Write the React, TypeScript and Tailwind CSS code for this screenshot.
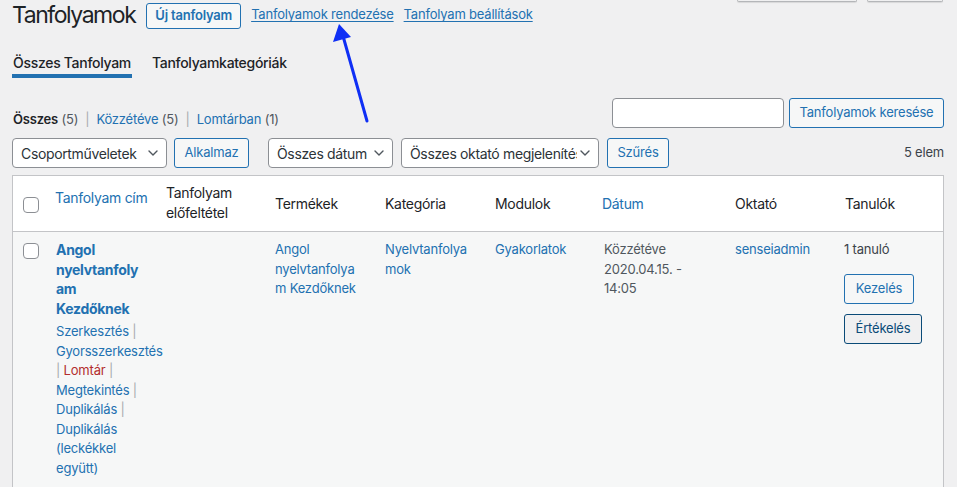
import React from "react";

const Chevron = () => (
  <svg width="10" height="6" viewBox="0 0 10 6" className="shrink-0">
    <path d="M1 1l4 4 4-4" fill="none" stroke="#50575e" strokeWidth="1.4" strokeLinecap="round" strokeLinejoin="round" />
  </svg>
);

const Checkbox = ({ className = "" }: { className?: string }) => (
  <div className={`w-[16px] h-[16px] rounded-[4px] border border-[#8c8f94] bg-white ${className}`} />
);

const Select = ({ label, w }: { label: string; w: string }) => (
  <div className={`${w} h-[30px] flex items-center bg-white border border-[#8c8f94] rounded-[4px] pl-[8px] pr-[8px] text-[14px] tracking-[-0.35px] text-[#2c3338]`}>
    <div className="flex-1 overflow-hidden whitespace-nowrap">{label}</div>
    <div className="ml-[3px]">
      <Chevron />
    </div>
  </div>
);

const SecBtn = ({ label, className = "" }: { label: string; className?: string }) => (
  <div className={`h-[30px] px-[10px] flex items-center justify-center border border-[#2271b1] rounded-[3px] bg-[#f6f7f7] text-[#2271b1] text-[13px] whitespace-nowrap ${className}`}>
    {label}
  </div>
);

const Sep = () => <span className="text-[#a7aaad]">|</span>;

export default function App() {
  return (
    <div className="w-[957px] h-[487px] overflow-hidden bg-[#f0f0f1] relative font-[family-name:Inter,sans-serif] text-[13px] tracking-[-0.2px] text-[#3c434a]">
      <div className="pl-[12px] pr-[13px]">
        {/* header */}
        <div className="flex justify-between">
          <div className="flex items-center h-[30px]">
            <h1 className="text-[23px] leading-[30px] tracking-[-1.45px] text-[#1d2327] font-normal">Tanfolyamok</h1>
            <div className="ml-[11px] mt-[1px] h-[26px] px-[8px] flex items-center border border-[#2271b1] rounded-[3px] bg-[#f6f7f7] text-[#2271b1] font-semibold text-[13px]">
              Új tanfolyam
            </div>
            <span className="ml-[10px] text-[#2271b1] underline underline-offset-2">Tanfolyamok rendezése</span>
            <span className="ml-[10px] text-[#2271b1] underline underline-offset-2">Tanfolyam beállítások</span>
          </div>
          <div className="flex gap-[10px] pr-[1px]">
            <div className="w-[120px] h-[2px] border-b border-x border-[#b4b6b9] rounded-b-[3px] shadow-[0_1px_1px_rgba(0,0,0,0.1)]" />
            <div className="w-[76px] h-[2px] border-b border-x border-[#b4b6b9] rounded-b-[3px] shadow-[0_1px_1px_rgba(0,0,0,0.1)]" />
          </div>
        </div>

        {/* tabs */}
        <div className="flex gap-[20px] mt-[23px] text-[14px] tracking-[-0.3px] text-[#1d2327]">
          <div className="leading-[20px] pb-[1px] border-b-[4px] border-[#2271b1] px-[1px] font-medium">Összes Tanfolyam</div>
          <div className="leading-[20px] pb-[1px] border-b-[4px] border-transparent font-medium">Tanfolyamkategóriák</div>
        </div>

        {/* status + search */}
        <div className="flex justify-between items-start mt-[20px]">
          <div className="mt-[11px] leading-[20px] pl-[1px] flex gap-[7px]">
            <span>
              <span className="font-semibold text-[#1d2327]">Összes</span> <span className="text-[#50575e]">(5)</span>
            </span>
            <Sep />
            <span>
              <span className="text-[#2271b1]">Közzétéve</span> <span className="text-[#50575e]">(5)</span>
            </span>
            <Sep />
            <span>
              <span className="text-[#2271b1]">Lomtárban</span> <span className="text-[#50575e]">(1)</span>
            </span>
          </div>
          <div className="flex items-center gap-[5px]">
            <div className="w-[172px] h-[30px] bg-white border border-[#8c8f94] rounded-[4px]" />
            <SecBtn label="Tanfolyamok keresése" className="w-[155px]" />
          </div>
        </div>

        {/* tablenav */}
        <div className="flex items-center mt-[9px]">
          <Select label="Csoportműveletek" w="w-[155px]" />
          <SecBtn label="Alkalmaz" className="ml-[7px] w-[75px]" />
          <Select label="Összes dátum" w="ml-[19px] w-[125px]" />
          <Select label="Összes oktató megjelenítése" w="ml-[8px] w-[198px]" />
          <SecBtn label="Szűrés" className="ml-[8px] w-[62px]" />
          <div className="ml-auto text-[#3c434a]">5 elem</div>
        </div>

        {/* table */}
        <div className="mt-[7px] bg-white border border-[#c3c4c7]">
          <div className="grid grid-cols-[32px_111px_109px_110px_110px_107px_133px_110px_108px] border-b border-[#c3c4c7] text-[14px] tracking-[-0.3px] text-[#1d2327] leading-[20px]">
            <div className="pl-[10px] flex items-center">
              <Checkbox className="mt-[2px]" />
            </div>
            <div className="px-[10px] pt-[12px] text-[#2271b1] whitespace-nowrap">Tanfolyam cím</div>
            <div className="px-[10px] pt-[7px] pb-[8px]">
              Tanfolyam
              <br />
              előfeltétel
            </div>
            <div className="px-[10px] flex items-center">Termékek</div>
            <div className="px-[10px] flex items-center">Kategória</div>
            <div className="px-[10px] flex items-center">Modulok</div>
            <div className="px-[10px] flex items-center text-[#2271b1]">Dátum</div>
            <div className="px-[10px] flex items-center">Oktató</div>
            <div className="px-[10px] flex items-center">Tanulók</div>
          </div>

          <div className="grid grid-cols-[32px_111px_109px_110px_110px_107px_133px_110px_108px] bg-[#f6f7f7] leading-[19.5px] pb-[10px]">
            <div className="pl-[10px] pt-[11px]">
              <Checkbox />
            </div>
            <div className="pl-[11px] pr-[10px] pt-[8px] whitespace-nowrap">
              <div className="text-[14px] tracking-[-0.3px] font-bold text-[#2271b1] leading-[19.6px]">
                <div>Angol</div>
                <div>nyelvtanfoly</div>
                <div>am</div>
                <div>Kezdőknek</div>
              </div>
              <div className="mt-[4px] text-[#2271b1]">
                <div>
                  Szerkesztés <Sep />
                </div>
                <div>Gyorsszerkesztés</div>
                <div>
                  <Sep /> <span className="text-[#b32d2e]">Lomtár</span> <Sep />
                </div>
                <div>
                  Megtekintés <Sep />
                </div>
                <div>
                  Duplikálás <Sep />
                </div>
                <div>Duplikálás</div>
                <div>(leckékkel</div>
                <div>együtt)</div>
              </div>
            </div>
            <div className="px-[10px] pt-[8px]" />
            <div className="px-[10px] pt-[8px] text-[#2271b1] whitespace-nowrap">
              <div>Angol</div>
              <div>nyelvtanfolya</div>
              <div>m Kezdőknek</div>
            </div>
            <div className="px-[10px] pt-[8px] text-[#2271b1] whitespace-nowrap">
              <div>Nyelvtanfolya</div>
              <div>mok</div>
            </div>
            <div className="px-[10px] pt-[8px] text-[#2271b1]">Gyakorlatok</div>
            <div className="pl-[12px] pr-[10px] pt-[8px] text-[#50575e] whitespace-nowrap">
              <div>Közzétéve</div>
              <div>2020.04.15. -</div>
              <div>14:05</div>
            </div>
            <div className="px-[10px] pt-[8px] text-[#2271b1]">senseiadmin</div>
            <div className="pl-[9px] pr-[10px] pt-[8px]">
              <div>1 tanuló</div>
              <SecBtn label="Kezelés" className="mt-[14px] w-[70px]" />
              <div className="mt-[10px] w-[78px] h-[30px] flex items-center justify-center border border-[#0a4b78] rounded-[3px] bg-[#f0f0f1] text-[#0a4b78] text-[13px]">
                Értékelés
              </div>
            </div>
          </div>
        </div>
      </div>

      {/* annotation arrow */}
      <svg className="absolute left-0 top-0 pointer-events-none" width="957" height="487" viewBox="0 0 957 487">
        <line x1="367" y1="121" x2="343" y2="36" stroke="#0f2ff5" strokeWidth="3" strokeLinecap="round" />
        <polygon points="339,24 333,42 351,37" fill="#0f2ff5" />
      </svg>
    </div>
  );
}
